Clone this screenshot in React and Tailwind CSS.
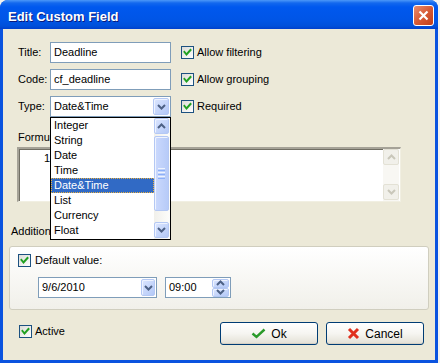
import React from "react";

function Check({ className = "" }) {
  return (
    <div className={"w-[13px] h-[13px] shrink-0 border border-[#1C5180] bg-gradient-to-br from-[#DCDCD7] to-white flex items-center justify-center " + className}>
      <svg width="11" height="11" viewBox="0 0 11 11">
        <path d="M2.5 5 L4.5 7.5 L8.5 3" stroke="#21A121" strokeWidth="2" fill="none" strokeLinecap="square" />
      </svg>
    </div>
  );
}

function Chevron({ up = false, color = "#4D6185", w = 9, h = 6 }) {
  return (
    <svg width={w} height={h} viewBox="0 0 9 6">
      {up ? (
        <path d="M1 5 L4.5 1.5 L8 5" stroke={color} strokeWidth="2" fill="none" />
      ) : (
        <path d="M1 1 L4.5 4.5 L8 1" stroke={color} strokeWidth="2" fill="none" />
      )}
    </svg>
  );
}

function BlueBtn({ up = false, className = "" }) {
  return (
    <div className={"rounded-[2px] border border-[#B4C8F4] bg-gradient-to-br from-[#DCE6FE] to-[#B3C8F7] flex items-center justify-center shadow-[inset_1px_1px_0_#EEF3FF] " + className}>
      <Chevron up={up} />
    </div>
  );
}

function GrayBtn({ up = false, className = "" }) {
  return (
    <div className={"rounded-[2px] border border-[#E3E1D5] bg-[#F1F0EA] flex items-center justify-center " + className}>
      <Chevron up={up} color="#C9C7BA" />
    </div>
  );
}

function XPButton({ children }) {
  return (
    <div className="w-[98px] h-[23px] rounded-[3px] border border-[#003C74] bg-gradient-to-b from-white via-[#F6F5F1] to-[#E3E0D5] shadow-[inset_0_-1px_0_#D6D0C5] flex items-center justify-center gap-[5px] text-[12px]">
      {children}
    </div>
  );
}

const items = ["Integer", "String", "Date", "Time", "Date&Time", "List", "Currency", "Float"];

export default function App() {
  return (
    <div className="w-[440px] h-[363px] bg-[#F2F2F0] overflow-hidden font-['Liberation_Sans',Arial,sans-serif]">
      <div className="w-[438px] h-[363px] rounded-t-[8px] bg-[#0A53DF] flex flex-col overflow-hidden">
        {/* Title bar */}
        <div className="h-[29px] shrink-0 flex items-start bg-[linear-gradient(to_bottom,#4C98F8_0px,#1368EE_3px,#0058EE_7px,#0055E6_20px,#0050DA_26px,#0040CC_29px)]">
          <div className="mt-[9px] ml-[8px] leading-[15px] text-[13px] font-bold text-white [text-shadow:1px_1px_0_#0A1A7A]">
            Edit Custom Field
          </div>
          <div className="ml-auto mr-[4px] mt-[5px] w-[21px] h-[21px] rounded-[3px] border border-white bg-gradient-to-br from-[#E88C6E] via-[#D75A35] to-[#C03E16] flex items-center justify-center">
            <svg width="11" height="11" viewBox="0 0 11 11">
              <path d="M1.5 1.5 L9.5 9.5 M9.5 1.5 L1.5 9.5" stroke="white" strokeWidth="2.2" />
            </svg>
          </div>
        </div>

        {/* Client */}
        <div className="relative mx-[3px] mb-[3px] flex-1 bg-[#ECE9D8] text-[11px] text-black flex flex-col">
          <div className="pt-[13px] pl-[15px] flex flex-col gap-[6px]">
            <div className="flex items-center h-[21px]">
              <div className="w-[32px]">Title:</div>
              <div className="w-[121px] h-[21px] border border-[#7F9DB9] bg-white pl-[3px] flex items-center">Deadline</div>
              <Check className="ml-[10px]" />
              <div className="ml-[3px]">Allow filtering</div>
            </div>
            <div className="flex items-center h-[21px]">
              <div className="w-[32px]">Code:</div>
              <div className="w-[121px] h-[21px] border border-[#7F9DB9] bg-white pl-[3px] flex items-center">cf_deadline</div>
              <Check className="ml-[10px]" />
              <div className="ml-[3px]">Allow grouping</div>
            </div>
            <div className="flex items-center h-[21px]">
              <div className="w-[32px]">Type:</div>
              <div className="w-[121px] h-[21px] border border-[#7F9DB9] bg-white pl-[3px] flex items-center">
                <span className="flex-1">Date&amp;Time</span>
                <BlueBtn className="w-[16px] h-[17px] mr-[1px]" />
              </div>
              <Check className="ml-[10px]" />
              <div className="ml-[3px]">Required</div>
            </div>
          </div>

          <div className="mt-[14px] ml-[15px] leading-[13px]">Formula:</div>
          <div className="mt-[3px] ml-[14px] w-[384px] h-[55px] border-t-2 border-l-2 border-b border-r border-t-[#A5A297] border-l-[#A5A297] border-b-[#F1EFE2] border-r-[#F1EFE2] bg-white flex">
            <div className="w-[31px] text-right pt-[3px] leading-[13px] shadow-[inset_1px_1px_0_#716F64] h-full">1</div>
            <div className="flex-1 shadow-[inset_0_1px_0_#716F64]" />
            <div className="w-[16px] h-full flex flex-col bg-[#F8F7F3] mr-[1px]">
              <GrayBtn up className="w-[16px] h-[16px]" />
              <div className="flex-1" />
              <GrayBtn className="w-[16px] h-[16px] mb-[1px]" />
            </div>
          </div>

          <div className="mt-[23px] ml-[8px] leading-[13px]">Additional options:</div>
          <div className="mt-[8px] ml-[6px] w-[420px] h-[64px] border border-[#D0CEBF] rounded-[3px] bg-gradient-to-b from-white to-[#F1F0EA]">
            <div className="mt-[7px] ml-[8px] flex items-center">
              <Check />
              <div className="ml-[4px] leading-[13px]">Default value:</div>
            </div>
            <div className="mt-[10px] ml-[28px] flex items-center gap-[8px]">
              <div className="w-[119px] h-[21px] border border-[#7F9DB9] bg-white pl-[3px] flex items-center">
                <span className="flex-1">9/6/2010</span>
                <BlueBtn className="w-[14px] h-[17px] mr-[1px]" />
              </div>
              <div className="w-[66px] h-[21px] border border-[#7F9DB9] bg-white pl-[3px] flex items-center">
                <span className="flex-1">09:00</span>
                <div className="w-[17px] h-[18px] mr-[1px] flex flex-col">
                  <BlueBtn up className="h-[9px] w-full" />
                  <BlueBtn className="h-[9px] w-full" />
                </div>
              </div>
            </div>
          </div>

          <div className="mt-[12px] flex items-start">
            <Check className="ml-[16px] mt-[3px]" />
            <div className="ml-[3px] mt-[3px] leading-[13px]">Active</div>
            <div className="ml-auto mr-[11px] flex gap-[8px]">
              <XPButton>
                <svg width="15" height="11" viewBox="0 0 15 11">
                  <path d="M1.5 5.5 L5.5 9 L13.5 1.5" stroke="#2A9A2A" strokeWidth="2.4" fill="none" />
                </svg>
                <span>Ok</span>
              </XPButton>
              <XPButton>
                <svg width="13" height="13" viewBox="0 0 13 13">
                  <path d="M2 2 L11 11 M11 2 L2 11" stroke="#E0301E" strokeWidth="3" />
                </svg>
                <span>Cancel</span>
              </XPButton>
            </div>
          </div>

          {/* Dropdown list overlay */}
          <div className="absolute left-[47px] top-[88px] w-[121px] h-[123px] border border-black bg-white flex">
            <div className="flex-1 flex flex-col">
              {items.map((it) =>
                it === "Date&Time" ? (
                  <div key={it} className="h-[15px] leading-[13px] pl-[2px] bg-[#316AC5] text-white border border-dotted border-[#E8B040]">
                    {it}
                  </div>
                ) : (
                  <div key={it} className="h-[15px] leading-[15px] pl-[3px]">{it}</div>
                )
              )}
            </div>
            <div className="w-[16px] flex flex-col bg-gradient-to-r from-[#F1F0EB] to-[#FDFDFB]">
              <BlueBtn up className="w-[15px] h-[16px]" />
              <div className="mt-[2px] w-[15px] h-[75px] rounded-[2px] border border-[#B4C8F4] bg-gradient-to-r from-[#CBD9FD] to-[#B7CBF8] flex flex-col items-center justify-center gap-[1px] shadow-[inset_1px_1px_0_#EEF3FF]">
                <div className="w-[7px] h-[1px] bg-[#EEF4FE]" />
                <div className="w-[7px] h-[1px] bg-[#8CB0F8]" />
                <div className="w-[7px] h-[1px] bg-[#EEF4FE]" />
                <div className="w-[7px] h-[1px] bg-[#8CB0F8]" />
                <div className="w-[7px] h-[1px] bg-[#EEF4FE]" />
                <div className="w-[7px] h-[1px] bg-[#8CB0F8]" />
              </div>
              <div className="flex-1" />
              <BlueBtn className="w-[15px] h-[16px] mb-[1px]" />
            </div>
          </div>
        </div>
      </div>
    </div>
  );
}
